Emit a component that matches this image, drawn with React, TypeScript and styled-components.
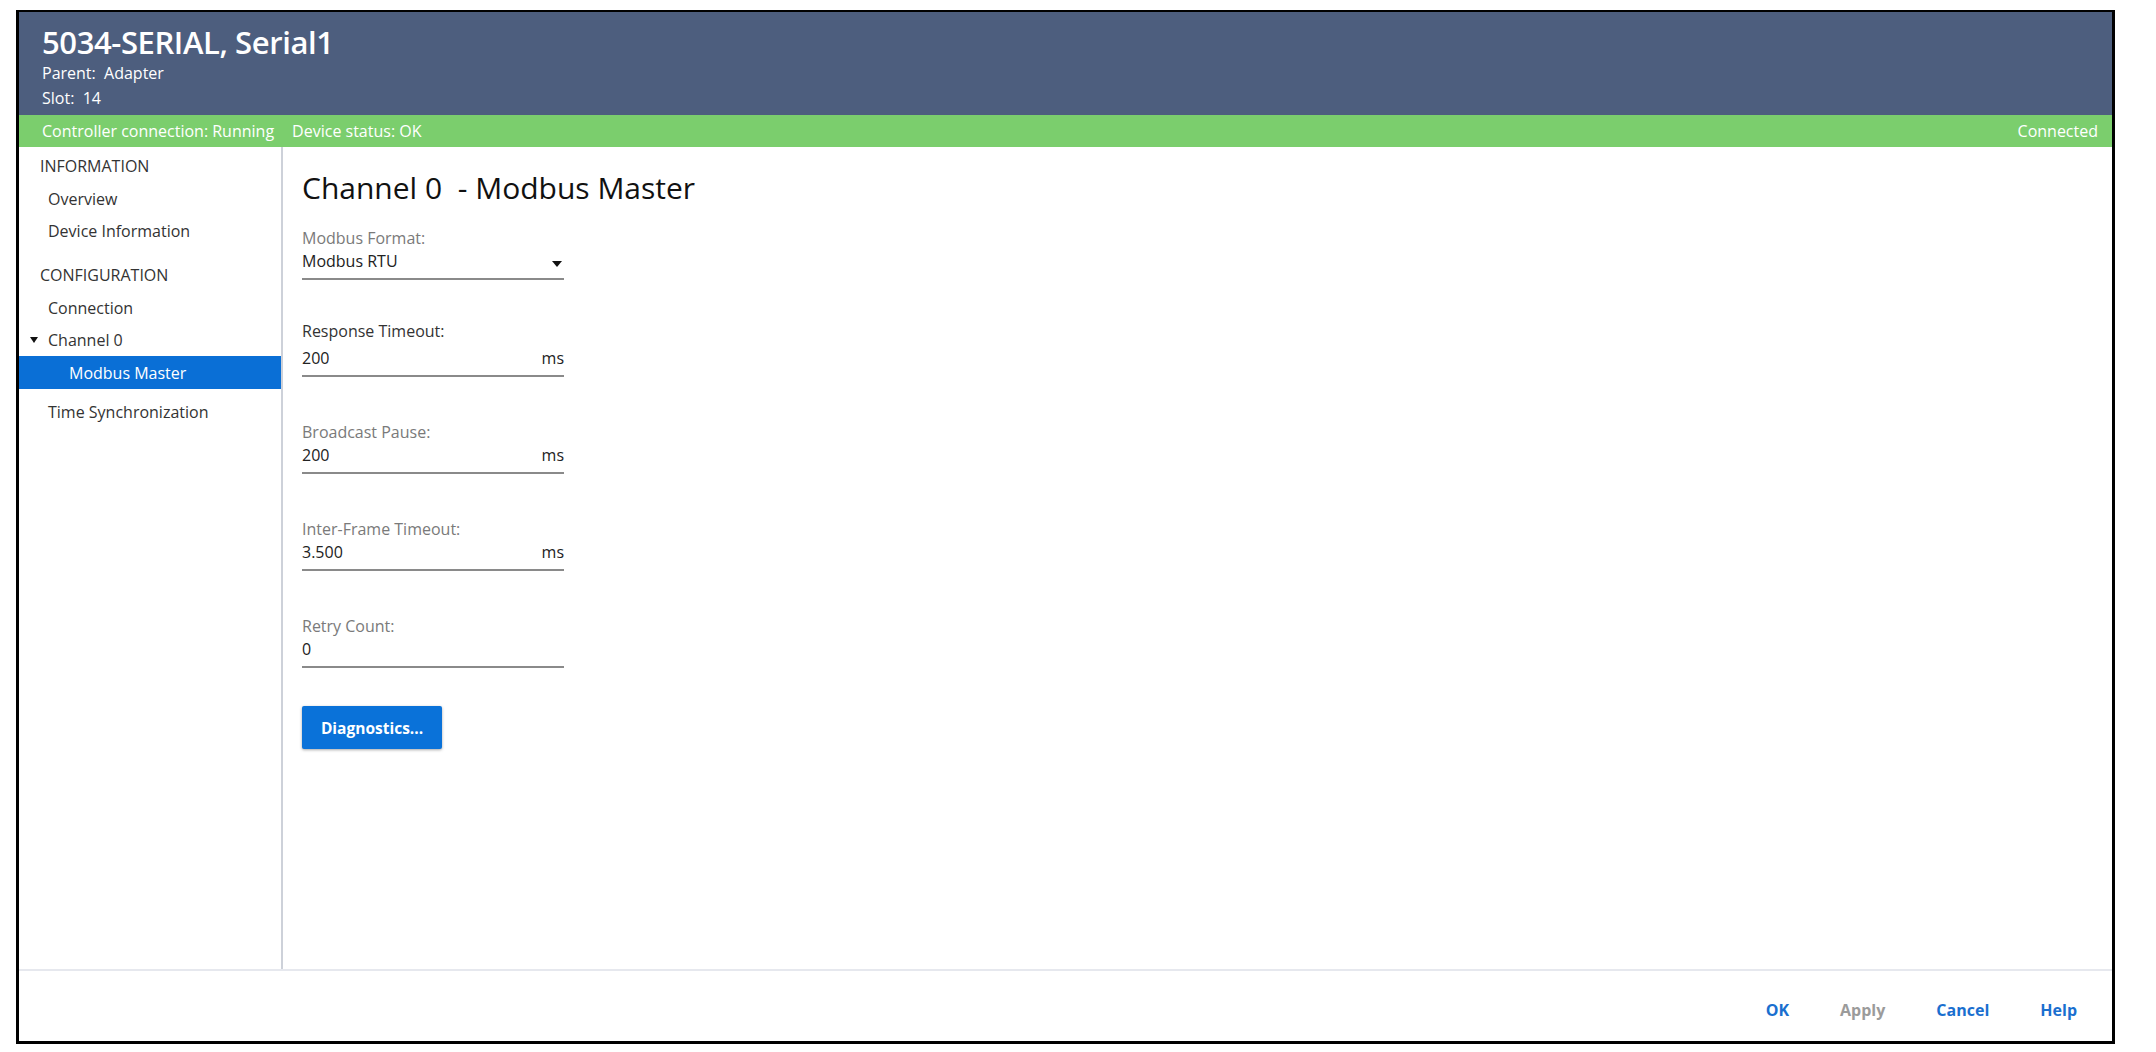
import React from 'react';
import styled, { createGlobalStyle } from 'styled-components';

const GlobalStyle = createGlobalStyle`
  html, body {
    margin: 0;
    padding: 0;
    background: #fff;
  }
  body {
    font-family: "Open Sans", "Noto Sans", sans-serif;
    color: #333;
  }
`;

const Frame = styled.div`
  margin: 10px 0 0 16px;
  width: 2093px;
  height: 1029px;
  border: 3px solid #000;
  border-top-width: 2px;
  display: flex;
  flex-direction: column;
  background: #fff;
`;

const Header = styled.header`
  background: #4d5e7e;
  color: #fff;
  height: 103px;
  flex-shrink: 0;
  box-sizing: border-box;
  padding: 11px 23px 0;
`;

const Title = styled.h1`
  margin: 0;
  font-size: 31px;
  font-weight: 600;
  line-height: 38px;
  letter-spacing: -0.4px;
`;

const Meta = styled.div`
  font-size: 16px;
  line-height: 25px;
`;

const StatusBar = styled.div`
  background: #7bce6d;
  color: #fff;
  height: 32px;
  flex-shrink: 0;
  display: flex;
  align-items: center;
  padding: 0 14px 0 23px;
  font-size: 16px;
  gap: 18px;
`;

const Spacer = styled.div`
  flex: 1;
`;

const Body = styled.div`
  flex: 1;
  display: flex;
  min-height: 0;
  border-bottom: 2px solid #e6e8ee;
`;

const Sidebar = styled.nav`
  width: 262px;
  flex-shrink: 0;
  border-right: 2px solid #cdd1d9;
  padding-top: 6px;
  font-size: 16px;
`;

const SectionTitle = styled.div<{ $top?: number }>`
  padding-left: 21px;
  line-height: 26px;
  margin-top: ${({ $top }) => $top || 0}px;
  margin-bottom: 4px;
`;

const NavItem = styled.div<{ $indent?: number; $active?: boolean }>`
  display: flex;
  align-items: center;
  height: ${({ $active }) => ($active ? 33 : 32)}px;
  padding-left: ${({ $indent }) => $indent || 29}px;
  background: ${({ $active }) => ($active ? '#0a6fd6' : 'transparent')};
  color: ${({ $active }) => ($active ? '#fff' : '#333')};
  margin-bottom: ${({ $active }) => ($active ? 7 : 0)}px;
`;

const Caret = styled.span`
  display: inline-block;
  width: 0;
  height: 0;
  border-left: 4px solid transparent;
  border-right: 4px solid transparent;
  border-top: 6px solid #111;
  margin: 0 10px 0 0;
`;

const Main = styled.main`
  flex: 1;
  padding: 21px 0 0 19px;
`;

const PageTitle = styled.h2`
  margin: 0 0 19px;
  font-size: 30px;
  font-weight: 400;
  line-height: 40px;
  color: #111;
  white-space: pre;
`;

const Field = styled.div`
  width: 262px;
  margin-bottom: 44px;
`;

const Label = styled.div<{ $dark?: boolean }>`
  font-size: 16px;
  line-height: 22px;
  color: ${({ $dark }) => ($dark ? '#333' : '#7a7a7a')};
  margin-top: ${({ $dark }) => ($dark ? -4 : 0)}px;
  padding-bottom: ${({ $dark }) => ($dark ? 4 : 0)}px;
`;

const ValueRow = styled.div`
  display: flex;
  align-items: center;
  justify-content: space-between;
  height: 24px;
  padding-bottom: 5px;
  border-bottom: 2px solid #8a8a8a;
  font-size: 16px;
  color: #222;
`;

const Arrow = styled.span`
  width: 0;
  height: 0;
  border-left: 5px solid transparent;
  border-right: 5px solid transparent;
  border-top: 6px solid #111;
  margin: 6px 2px 0 0;
`;

const PrimaryButton = styled.button`
  width: 140px;
  height: 43px;
  margin-top: -6px;
  border: none;
  border-radius: 2px;
  background: #0a72d9;
  color: #fff;
  font-family: inherit;
  font-size: 15.5px;
  font-weight: 700;
  box-shadow: 0 1px 3px rgba(0, 0, 0, 0.35);
`;

const Footer = styled.footer`
  height: 70px;
  flex-shrink: 0;
  display: flex;
  align-items: center;
  justify-content: flex-end;
  gap: 51px;
  padding: 8px 35px 0 0;
  box-sizing: border-box;
`;

const FooterButton = styled.button<{ $disabled?: boolean }>`
  border: none;
  background: none;
  padding: 0;
  font-family: inherit;
  font-size: 16px;
  font-weight: 700;
  color: ${({ $disabled }) => ($disabled ? '#9b9b9b' : '#1a6fcf')};
`;

const fields = [
  { label: 'Response Timeout:', value: '200', unit: 'ms', dark: true },
  { label: 'Broadcast Pause:', value: '200', unit: 'ms' },
  { label: 'Inter-Frame Timeout:', value: '3.500', unit: 'ms' },
  { label: 'Retry Count:', value: '0' },
];

export default function App() {
  return (
    <>
      <GlobalStyle />
      <Frame>
        <Header>
          <Title>5034-SERIAL, Serial1</Title>
          <Meta>Parent:&nbsp; Adapter</Meta>
          <Meta>Slot:&nbsp; 14</Meta>
        </Header>
        <StatusBar>
          <span>Controller connection: Running</span>
          <span>Device status: OK</span>
          <Spacer />
          <span>Connected</span>
        </StatusBar>
        <Body>
          <Sidebar>
            <SectionTitle>INFORMATION</SectionTitle>
            <NavItem>Overview</NavItem>
            <NavItem>Device Information</NavItem>
            <SectionTitle $top={15}>CONFIGURATION</SectionTitle>
            <NavItem>Connection</NavItem>
            <NavItem $indent={11}>
              <Caret />
              Channel 0
            </NavItem>
            <NavItem $indent={50} $active>
              Modbus Master
            </NavItem>
            <NavItem>Time Synchronization</NavItem>
          </Sidebar>
          <Main>
            <PageTitle>{'Channel 0  - Modbus Master'}</PageTitle>
            <Field>
              <Label>Modbus Format:</Label>
              <ValueRow>
                <span>Modbus RTU</span>
                <Arrow />
              </ValueRow>
            </Field>
            {fields.map((f) => (
              <Field key={f.label}>
                <Label $dark={f.dark}>{f.label}</Label>
                <ValueRow>
                  <span>{f.value}</span>
                  {f.unit && <span>{f.unit}</span>}
                </ValueRow>
              </Field>
            ))}
            <PrimaryButton>Diagnostics...</PrimaryButton>
          </Main>
        </Body>
        <Footer>
          <FooterButton>OK</FooterButton>
          <FooterButton $disabled>Apply</FooterButton>
          <FooterButton>Cancel</FooterButton>
          <FooterButton>Help</FooterButton>
        </Footer>
      </Frame>
    </>
  );
}
